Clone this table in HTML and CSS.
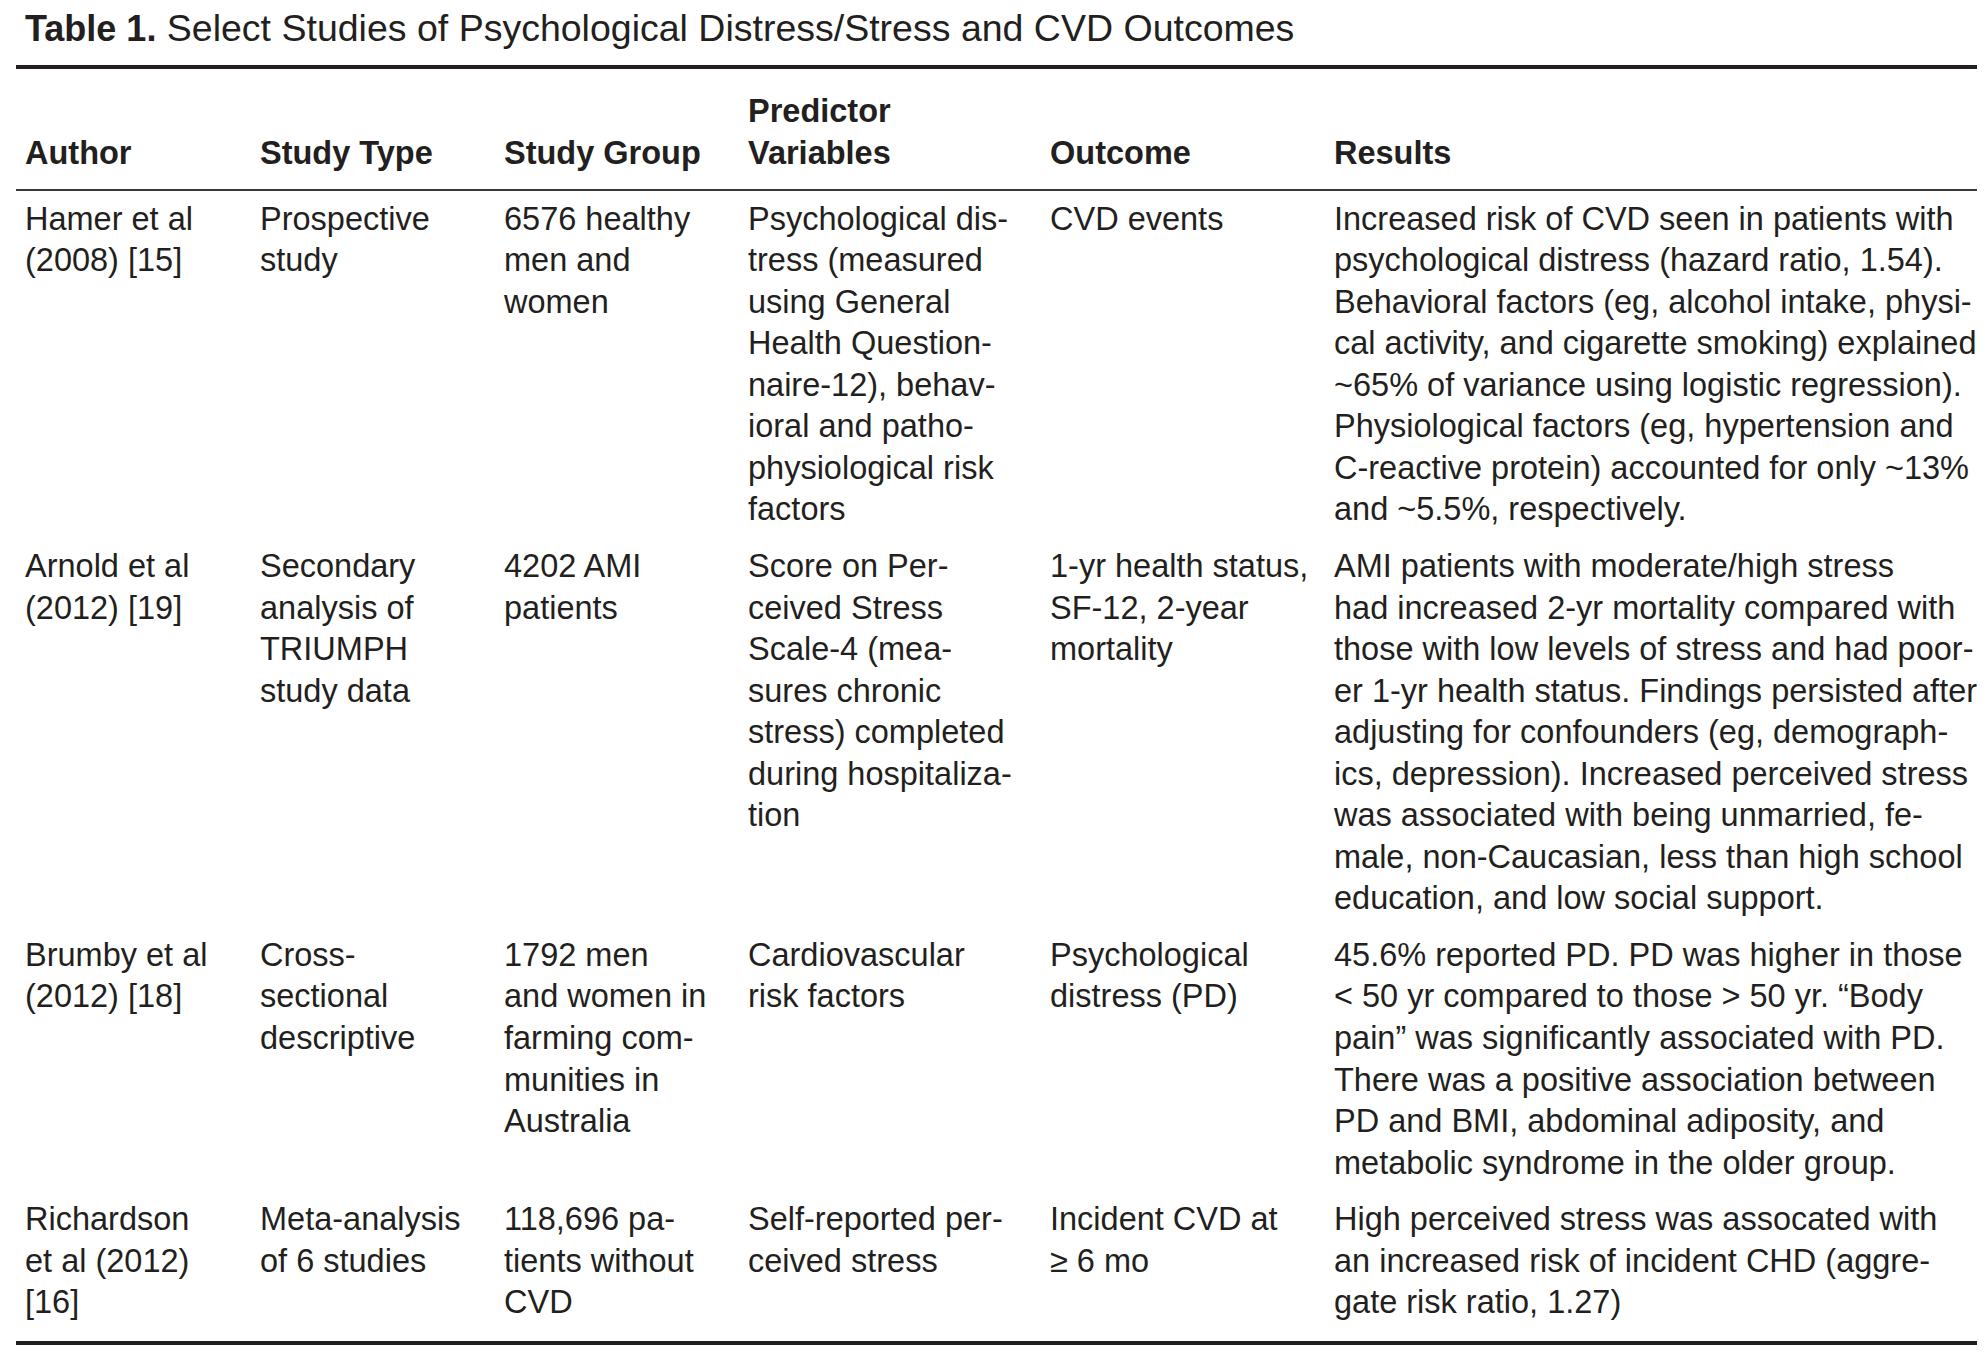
FILE: index.html
```html
<!DOCTYPE html>
<html lang="en">
<head>
<meta charset="utf-8">
<title>Table 1. Select Studies of Psychological Distress/Stress and CVD Outcomes</title>
<link rel="stylesheet" href="styles.css">
</head>
<body>
<div class="page">
  <h1 class="caption"><span class="caption-label">Table 1.</span> Select Studies of Psychological Distress/Stress and CVD Outcomes</h1>
  <table class="studies">
    <colgroup>
      <col class="c-author">
      <col class="c-type">
      <col class="c-group">
      <col class="c-pred">
      <col class="c-outcome">
      <col class="c-results">
    </colgroup>
    <thead>
      <tr>
        <th>Author</th>
        <th>Study Type</th>
        <th>Study Group</th>
        <th>Predictor<br>Variables</th>
        <th>Outcome</th>
        <th>Results</th>
      </tr>
    </thead>
    <tbody>
      <tr>
        <td>Hamer et al<br>(2008) [15]</td>
        <td>Prospective<br>study</td>
        <td>6576 healthy<br>men and<br>women</td>
        <td>Psychological dis-<br>tress (measured<br>using General<br>Health Question-<br>naire-12), behav-<br>ioral and patho-<br>physiological risk<br>factors</td>
        <td>CVD events</td>
        <td>Increased risk of CVD seen in patients with<br>psychological distress (hazard ratio, 1.54).<br>Behavioral factors (eg, alcohol intake, physi-<br>cal activity, and cigarette smoking) explained<br>~65% of variance using logistic regression).<br>Physiological factors (eg, hypertension and<br>C-reactive protein) accounted for only ~13%<br>and ~5.5%, respectively.</td>
      </tr>
      <tr>
        <td>Arnold et al<br>(2012) [19]</td>
        <td>Secondary<br>analysis of<br>TRIUMPH<br>study data</td>
        <td>4202 AMI<br>patients</td>
        <td>Score on Per-<br>ceived Stress<br>Scale-4 (mea-<br>sures chronic<br>stress) completed<br>during hospitaliza-<br>tion</td>
        <td>1-yr health status,<br>SF-12, 2-year<br>mortality</td>
        <td>AMI patients with moderate/high stress<br>had increased 2-yr mortality compared with<br>those with low levels of stress and had poor-<br>er 1-yr health status. Findings persisted after<br>adjusting for confounders (eg, demograph-<br>ics, depression). Increased perceived stress<br>was associated with being unmarried, fe-<br>male, non-Caucasian, less than high school<br>education, and low social support.</td>
      </tr>
      <tr>
        <td>Brumby et al<br>(2012) [18]</td>
        <td>Cross-<br>sectional<br>descriptive</td>
        <td>1792 men<br>and women in<br>farming com-<br>munities in<br>Australia</td>
        <td>Cardiovascular<br>risk factors</td>
        <td>Psychological<br>distress (PD)</td>
        <td>45.6% reported PD. PD was higher in those<br>&lt; 50 yr compared to those &gt; 50 yr. “Body<br>pain” was significantly associated with PD.<br>There was a positive association between<br>PD and BMI, abdominal adiposity, and<br>metabolic syndrome in the older group.</td>
      </tr>
      <tr class="last">
        <td>Richardson<br>et al (2012)<br>[16]</td>
        <td>Meta-analysis<br>of 6 studies</td>
        <td>118,696 pa-<br>tients without<br>CVD</td>
        <td>Self-reported per-<br>ceived stress</td>
        <td>Incident CVD at<br>≥ 6 mo</td>
        <td>High perceived stress was assocated with<br>an increased risk of incident CHD (aggre-<br>gate risk ratio, 1.27)</td>
      </tr>
    </tbody>
  </table>
</div>
</body>
</html>
```

FILE: styles.css
```css
html, body {
  margin: 0;
  padding: 0;
  background: #ffffff;
}

body {
  font-family: "Liberation Sans", Arial, Helvetica, sans-serif;
  color: #231f20;
}

.page {
  padding: 6px 10px 0 16px;
}

.caption {
  margin: 0 0 14px 9px;
  font-size: 37.5px;
  line-height: 44px;
  font-weight: 400;
  white-space: nowrap;
}

.caption-label {
  font-size: 36px;
  font-weight: 700;
}

.studies {
  width: 1961px;
  table-layout: fixed;
  border-collapse: collapse;
  border-top: 4px solid #231f20;
  border-bottom: 4px solid #231f20;
  font-size: 32.5px;
  line-height: 41.55px;
}

.c-author { width: 235px; }
.c-type { width: 244px; }
.c-group { width: 244px; }
.c-pred { width: 302px; }
.c-outcome { width: 284px; }
.c-results { width: 652px; }

.studies th,
.studies td {
  padding: 7.5px 0 7.5px 9px;
  text-align: left;
  white-space: nowrap;
  vertical-align: top;
}

.studies th {
  font-weight: 700;
  vertical-align: bottom;
  padding-top: 22px;
  padding-bottom: 15px;
  border-bottom: 2px solid #3a3738;
}

.studies .last td {
  padding-bottom: 17px;
}
```
